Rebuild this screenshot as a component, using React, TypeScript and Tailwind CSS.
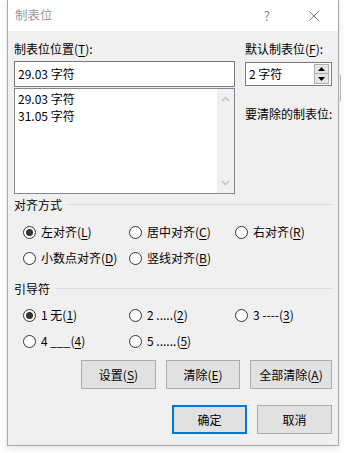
import React from 'react';

const font = { fontFamily: '"Noto Sans CJK SC", "Noto Sans", sans-serif' };

function Key({ k }: { k: string }) {
  return (
    <>
      (<span className="underline underline-offset-2">{k}</span>)
    </>
  );
}

function Radio({ checked, label, k }: { checked?: boolean; label: string; k: string }) {
  return (
    <div className="flex items-center h-[26px]">
      <span className="w-[13px] h-[13px] rounded-full border border-[#333] bg-white flex items-center justify-center shrink-0">
        {checked && <span className="w-[7px] h-[7px] rounded-full bg-[#333]" />}
      </span>
      <span className="ml-[5px] whitespace-pre">
        {label}
        <Key k={k} />
      </span>
    </div>
  );
}

function Section({ title }: { title: string }) {
  return (
    <div className="flex items-center h-[17px]">
      <span>{title}</span>
      <span className="flex-1 ml-[6px] h-px bg-[#dcdcdc]" />
    </div>
  );
}

function Btn({ children, w, primary }: { children: React.ReactNode; w: string; primary?: boolean }) {
  return (
    <div
      className={`${w} h-[29px] flex items-center justify-center bg-[#e1e1e1] ${
        primary ? 'border-2 border-[#0078d7]' : 'border border-[#adadad]'
      }`}
    >
      {children}
    </div>
  );
}

export default function App() {
  return (
    <div className="relative w-[346px] h-[453px] bg-white text-[12px] text-black overflow-hidden" style={font}>
      <div className="absolute left-[340px] top-[75px] w-[1px] h-[26px] bg-[#b8b8b8]" />
      <div className="ml-[7px] w-[332px] h-[446px] border-x border-b border-[#a9a9a9] flex flex-col shadow-[0_2px_6px_rgba(0,0,0,0.12)]">
        {/* title bar */}
        <div className="h-[31px] bg-white flex items-center shrink-0">
          <span className="ml-[7px] text-[#999] text-[12.5px]">制表位</span>
          <span className="ml-auto text-[#888] text-[13px] mr-[39px]">?</span>
          <svg width="10" height="10" viewBox="0 0 10 10" className="mr-[19px]">
            <path d="M0.5 0.5L9.5 9.5M9.5 0.5L0.5 9.5" stroke="#777" strokeWidth="1" fill="none" />
          </svg>
        </div>

        <div className="flex-1 bg-[#f0f0f0] pl-[6px] pr-[5px] pt-[9px]">
          <div className="flex gap-[10px]">
            {/* left column */}
            <div className="w-[221px]">
              <div className="h-[17px] leading-[17px]">
                制表位位置<Key k="T" />:
              </div>
              <div className="mt-[4px] h-[26px] border border-[#7a7a7a] bg-white flex items-center pl-[3px]">
                29.03 字符
              </div>
              <div className="mt-px h-[106px] border border-[#828790] bg-white flex">
                <div className="flex-1 pl-[3px] pt-px">
                  <div className="h-[17px] leading-[17px]">29.03 字符</div>
                  <div className="h-[17px] leading-[17px]">31.05 字符</div>
                </div>
                <div className="w-[17px] bg-[#f0f0f0] flex flex-col items-center justify-between py-[7px]">
                  <svg width="9" height="6" viewBox="0 0 9 6">
                    <path d="M1 5L4.5 1.5L8 5" stroke="#c2c2c2" strokeWidth="1.4" fill="none" />
                  </svg>
                  <svg width="9" height="6" viewBox="0 0 9 6">
                    <path d="M1 1L4.5 4.5L8 1" stroke="#c2c2c2" strokeWidth="1.4" fill="none" />
                  </svg>
                </div>
              </div>
            </div>

            {/* right column */}
            <div className="w-[87px]">
              <div className="h-[17px] leading-[17px]">
                默认制表位<Key k="F" />:
              </div>
              <div className="mt-[5px] h-[24px] border border-[#7a7a7a] bg-white flex items-center pl-[3px] pr-[2px]">
                <span className="flex-1">2 字符</span>
                <div className="flex flex-col">
                  <div className="w-[15px] h-[10px] border border-[#adadad] bg-[#e5e5e5] flex items-center justify-center">
                    <svg width="7" height="4" viewBox="0 0 7 4">
                      <path d="M0 4L3.5 0L7 4Z" fill="#000" />
                    </svg>
                  </div>
                  <div className="w-[15px] h-[10px] border border-[#adadad] border-t-0 bg-[#e5e5e5] flex items-center justify-center">
                    <svg width="7" height="4" viewBox="0 0 7 4">
                      <path d="M0 0L3.5 4L7 0Z" fill="#000" />
                    </svg>
                  </div>
                </div>
              </div>
              <div className="mt-[19px] h-[17px] leading-[17px] whitespace-nowrap">要清除的制表位:</div>
            </div>
          </div>

          {/* alignment */}
          <div className="mt-[2px]">
            <Section title="对齐方式" />
          </div>
          <div className="mt-[6px] pl-[9px] grid grid-cols-[106px_106px_1fr]">
            <Radio checked label="左对齐" k="L" />
            <Radio label="居中对齐" k="C" />
            <Radio label="右对齐" k="R" />
            <Radio label="小数点对齐" k="D" />
            <Radio label="竖线对齐" k="B" />
          </div>

          {/* leader */}
          <div className="mt-[9px]">
            <Section title="引导符" />
          </div>
          <div className="mt-[5px] pl-[9px] grid grid-cols-[106px_106px_1fr]">
            <Radio checked label="1 无" k="1" />
            <Radio label="2 ....." k="2" />
            <Radio label="3 ----" k="3" />
            <Radio label="4 ___" k="4" />
            <Radio label="5 ......" k="5" />
          </div>

          <div className="mt-[6px] flex justify-end gap-[10px] pr-px">
            <Btn w="w-[75px]">
              设置<Key k="S" />
            </Btn>
            <Btn w="w-[74px]">
              清除<Key k="E" />
            </Btn>
            <Btn w="w-[82px]">
              全部清除<Key k="A" />
            </Btn>
          </div>

          <div className="mt-[16px] flex justify-end gap-[10px] pr-px">
            <Btn w="w-[75px]" primary>
              确定
            </Btn>
            <Btn w="w-[75px]">取消</Btn>
          </div>
        </div>
      </div>
    </div>
  );
}
